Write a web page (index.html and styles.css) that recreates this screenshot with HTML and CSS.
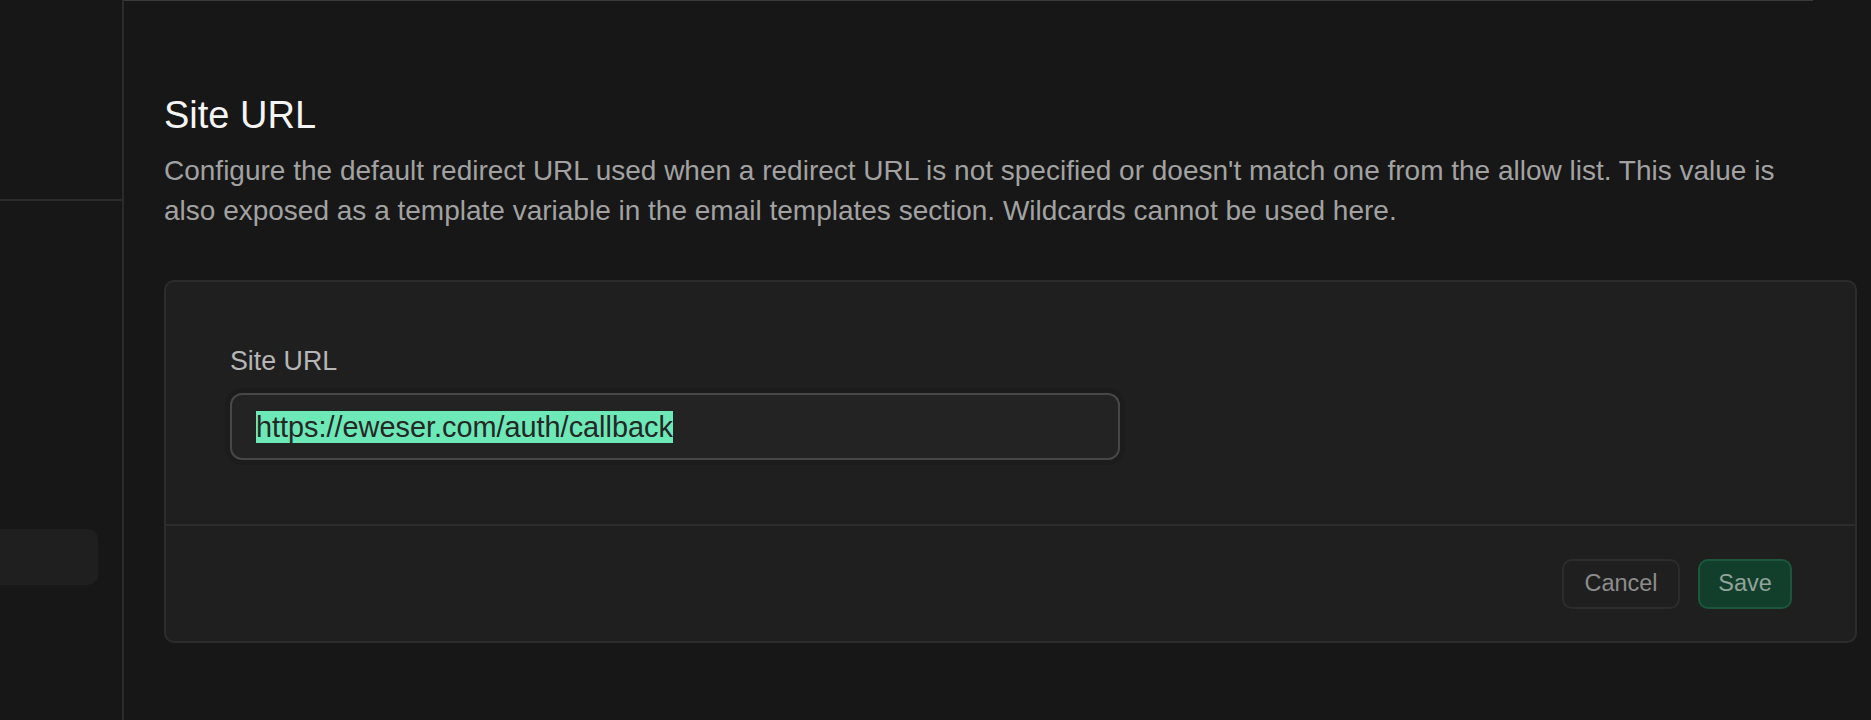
FILE: index.html
```html
<!DOCTYPE html>
<html lang="en">
<head>
<meta charset="utf-8">
<title>Site URL</title>
<link rel="stylesheet" href="styles.css">
</head>
<body>
<div class="app">
  <aside class="sidebar">
    <div class="sidebar-top"></div>
    <div class="sidebar-list">
      <div class="sidebar-item"></div>
    </div>
  </aside>
  <main class="main">
    <div class="topline"></div>
    <section class="section">
      <h2 class="title">Site URL</h2>
      <p class="desc">Configure the default redirect URL used when a redirect URL is not specified or doesn't match one from the allow list. This value is also exposed as a template variable in the email templates section. Wildcards cannot be used here.</p>
      <div class="card">
        <div class="card-body">
          <label class="label">Site URL</label>
          <div class="input-ring">
            <div class="input"><span class="selected">https://eweser.com/auth/callback</span></div>
          </div>
        </div>
        <div class="card-footer">
          <button class="btn btn-cancel">Cancel</button>
          <button class="btn btn-save">Save</button>
        </div>
      </div>
    </section>
  </main>
</div>
</body>
</html>
```

FILE: styles.css
```css
* { box-sizing: border-box; }
html, body {
  margin: 0;
  padding: 0;
  background: #171717;
  font-family: "Liberation Sans", Arial, sans-serif;
  overflow: hidden;
}
.app {
  display: flex;
  width: 1871px;
  height: 720px;
}
.sidebar {
  width: 124px;
  flex: none;
  border-right: 2px solid #2b2b2b;
  display: flex;
  flex-direction: column;
}
.sidebar-top {
  height: 201px;
  border-bottom: 2px solid #2b2b2b;
}
.sidebar-list {
  padding-top: 328px;
}
.sidebar-item {
  width: 98px;
  height: 56px;
  background: #1f1f1f;
  border-radius: 0 10px 10px 0;
}
.main {
  flex: 1;
  display: flex;
  flex-direction: column;
}
.topline {
  width: 1689px;
  height: 1px;
  background: #3a3a3a;
  flex: none;
}
.section {
  padding: 91px 14px 0 40px;
}
.title {
  margin: 0;
  font-size: 38px;
  line-height: 46px;
  font-weight: 400;
  color: #f4f4f4;
}
.desc {
  margin: 13px 0 0;
  max-width: 1640px;
  font-size: 28px;
  line-height: 40px;
  color: #a2a2a2;
}
.card {
  margin-top: 49px;
  background: #1f1f1f;
  border: 2px solid #2c2c2c;
  border-radius: 10px;
}
.card-body {
  padding: 62px 64px 64px;
  display: flex;
  flex-direction: column;
  gap: 15px;
  border-bottom: 2px solid #2c2c2c;
}
.label {
  font-size: 26.8px;
  line-height: 34px;
  color: #b6b6b6;
}
.input-ring {
  width: 890px;
  border-radius: 13px;
  box-shadow: 0 0 0 5px #1c1c1c;
}
.input {
  height: 67px;
  border: 2px solid #474747;
  border-radius: 12px;
  background: #232323;
  padding: 0 24px;
  display: flex;
  align-items: center;
  font-size: 28.85px;
  color: #e0e0e0;
}
.selected {
  background: #6ce9b7;
  color: #262626;
  line-height: 32px;
}
.card-footer {
  height: 115px;
  padding: 0 63px;
  display: flex;
  justify-content: flex-end;
  align-items: center;
  gap: 18px;
}
.btn {
  font-family: "Liberation Sans", Arial, sans-serif;
  font-size: 23.5px;
  height: 50px;
  border-radius: 10px;
  padding: 0;
  cursor: pointer;
}
.btn-cancel {
  width: 118px;
  background: #1f1f1f;
  border: 2px solid #2c2c2c;
  color: #8c8c8c;
}
.btn-save {
  width: 94px;
  background: #113f2b;
  border: 2px solid #1b573b;
  color: #93a29a;
}
```
